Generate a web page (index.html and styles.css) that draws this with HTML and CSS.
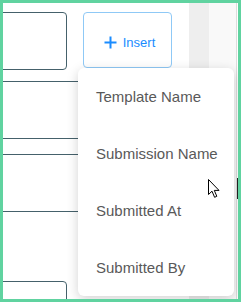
FILE: index.html
```html
<!DOCTYPE html>
<html>
<head>
<meta charset="utf-8">
<link rel="stylesheet" href="styles.css">
</head>
<body>
<div class="frame">
  <div class="main">
    <div class="row">
      <div class="field field-short"></div>
      <button class="insert-btn">
        <svg class="plus" width="13" height="13" viewBox="0 0 13 13"><path d="M6.5 0.5V12.5M0.5 6.5H12.5" stroke="#1a8cff" stroke-width="2" fill="none"/></svg>
        <span>Insert</span>
      </button>
    </div>
    <div class="field field-wide f2"></div>
    <div class="field field-wide f3"></div>
    <div class="field field-short f4"></div>
  </div>
  <div class="side">
    <div class="side-dark"></div>
    <div class="side-light"></div>
    <div class="side-edge"></div>
  </div>
  <ul class="menu">
    <li class="menu-item">Template Name</li>
    <li class="menu-item">Submission Name</li>
    <li class="menu-item">Submitted At</li>
    <li class="menu-item">Submitted By</li>
  </ul>
  <svg class="cursor" width="12" height="20" viewBox="0 0 12 20"><path d="M0.5 0.5V15.5L4 12.2L6.6 18.3L8.8 17.3L6.3 11.4H11L0.5 0.5Z" fill="#fff" stroke="#000" stroke-width="1" stroke-linejoin="round"/></svg>
  <div class="caret"></div>
</div>
</body>
</html>
```
FILE: styles.css
```css
html, body {
  margin: 0;
  padding: 0;
  background: #fff;
}
.frame {
  width: 241px;
  height: 302px;
  box-sizing: border-box;
  border: 3px solid #60d3a0;
  position: relative;
  overflow: hidden;
  display: flex;
  background: #fff;
  font-family: "Liberation Sans", Arial, sans-serif;
}
.main {
  width: 196px;
  margin-left: -10px;
  padding-top: 9px;
  display: flex;
  flex-direction: column;
  flex: none;
}
.row {
  display: flex;
  align-items: flex-start;
}
.field {
  box-sizing: border-box;
  height: 58px;
  border: 1px solid #45616b;
  border-radius: 4px;
  background: #fff;
  flex: none;
}
.field-short {
  width: 74px;
}
.field-wide {
  width: 170px;
}
.f2 {
  margin-top: 11px;
}
.f3 {
  margin-top: 15px;
}
.f4 {
  margin-top: 69px;
}
.insert-btn {
  margin-left: 16px;
  width: 89px;
  height: 56px;
  box-sizing: border-box;
  border: 1px solid #8fc9f6;
  border-radius: 4px;
  background: #fff;
  display: flex;
  align-items: center;
  justify-content: center;
  gap: 6px;
  padding: 4px 0 0 4px;
  color: #1a8cff;
  font-family: "Liberation Sans", Arial, sans-serif;
  font-size: 13px;
}
.plus {
  display: block;
  flex: none;
}
.side {
  flex: 1;
  display: flex;
}
.side-dark {
  width: 20px;
  background: #eeeeee;
}
.side-light {
  width: 27px;
  background: #f9f9f9;
}
.side-edge {
  width: 1px;
  background: #dcdcdc;
}
.menu {
  position: absolute;
  left: 75px;
  top: 65px;
  width: 156px;
  margin: 0;
  padding: 0;
  list-style: none;
  background: #fff;
  border-radius: 6px;
  box-shadow: 0 3px 12px rgba(0, 0, 0, 0.18);
}
.menu-item {
  height: 57px;
  line-height: 57px;
  padding-left: 18px;
  font-size: 15px;
  color: #595959;
  white-space: nowrap;
}
.cursor {
  position: absolute;
  left: 205px;
  top: 176px;
}
.caret {
  position: absolute;
  left: 234px;
  top: 175px;
  width: 1px;
  height: 21px;
  background: #222;
}
```
